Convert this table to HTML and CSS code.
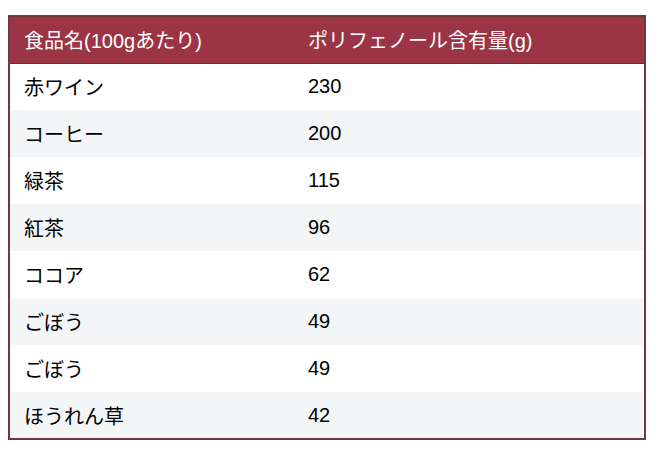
FILE: index.html
```html
<!DOCTYPE html>
<html lang="ja">
<head>
<meta charset="utf-8">
<link rel="stylesheet" href="styles.css">
</head>
<body>
<table class="poly">
  <thead>
    <tr><th class="c1">食品名(100gあたり)</th><th>ポリフェノール含有量(g)</th></tr>
  </thead>
  <tbody>
    <tr><td class="c1">赤ワイン</td><td>230</td></tr>
    <tr><td class="c1">コーヒー</td><td>200</td></tr>
    <tr><td class="c1">緑茶</td><td>115</td></tr>
    <tr><td class="c1">紅茶</td><td>96</td></tr>
    <tr><td class="c1">ココア</td><td>62</td></tr>
    <tr><td class="c1">ごぼう</td><td>49</td></tr>
    <tr><td class="c1">ごぼう</td><td>49</td></tr>
    <tr><td class="c1">ほうれん草</td><td>42</td></tr>
  </tbody>
</table>
</body>
</html>
```
FILE: styles.css
```css
html, body {
  margin: 0;
  padding: 0;
  background: #ffffff;
}
body {
  padding: 15px 0 0 8px;
  font-family: "Liberation Sans", "Noto Sans CJK JP", sans-serif;
}
.poly {
  width: 638px;
  border-collapse: collapse;
  border: 2px solid #6e3a40;
  font-size: 20px;
  color: #000;
}
.poly th, .poly td {
  height: 47px;
  padding: 0 0 0 14px;
  text-align: left;
  vertical-align: middle;
  box-sizing: border-box;
  font-weight: normal;
}
.poly .c1 { width: 285px; }
.poly th {
  background: #9b3444;
  color: #ffffff;
  border-bottom: 1px solid #6e2a33;
}
.poly tbody tr:nth-child(odd) td { background: #ffffff; }
.poly tbody tr:nth-child(even) td { background: #f4f5f7; }
```
